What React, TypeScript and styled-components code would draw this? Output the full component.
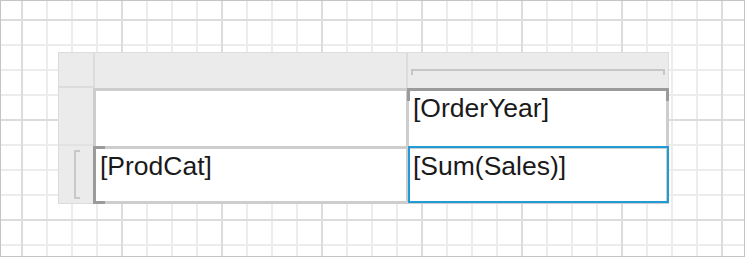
import React from 'react';
import styled, { createGlobalStyle, css } from 'styled-components';

const GlobalStyle = createGlobalStyle`
  html, body {
    margin: 0;
    padding: 0;
    background: #ffffff;
  }

  body {
    font-family: 'Liberation Sans', Arial, sans-serif;
  }
`;

const Canvas = styled.div`
  box-sizing: border-box;
  width: 745px;
  height: 257px;
  padding: 51px 0 0 57px;
  border: 1px solid #c4c4c4;
  background-color: #ffffff;
  background-image:
    linear-gradient(to right, #dcdcdc 2px, transparent 2px),
    linear-gradient(to bottom, #dcdcdc 2px, transparent 2px),
    linear-gradient(to right, #ececec 2px, transparent 2px),
    linear-gradient(to bottom, #ececec 2px, transparent 2px);
  background-size: 100px 100%, 100% 100px, 25px 100%, 100% 25px;
  background-position: 20px 0, 0 18px, 20px 0, 0 18px;
`;

const Tablix = styled.div`
  display: grid;
  grid-template-columns: 35px 576px;
  grid-template-rows: 36px 116px;
  width: 611px;
`;

const handleBase = css`
  box-sizing: border-box;
  position: relative;
  background: #ebebeb;
`;

const Corner = styled.div`
  ${handleBase};
  border-top: 1px solid #dcdcdc;
  border-left: 1px solid #dcdcdc;
  border-bottom: 2px solid #dcdcdc;
`;

const ColumnHandles = styled.div`
  display: grid;
  grid-template-columns: 315px 261px;
`;

interface BracketProps {
  readonly $bracket?: boolean;
}

const ColumnHandle = styled.div<BracketProps>`
  ${handleBase};
  border-top: 1px solid #dcdcdc;

  &:first-child {
    border-left: 2px solid #dcdcdc;
    border-right: 2px solid #dcdcdc;
  }

  &:last-child {
    border-right: 1px solid #dcdcdc;
  }

  ${props =>
    props.$bracket &&
    css`
      &::before {
        content: '';
        position: absolute;
        top: 16px;
        left: 3px;
        right: 3px;
        height: 4px;
        border: 2px solid #c6c6c6;
        border-bottom: none;
      }
    `}
`;

const RowHandles = styled.div`
  display: grid;
  grid-template-rows: 58px 58px;
`;

const RowHandle = styled.div<BracketProps>`
  ${handleBase};
  border-left: 1px solid #dcdcdc;

  &:first-child {
    border-bottom: 2px solid #e2e2e2;
  }

  &:last-child {
    border-bottom: 1px solid #dcdcdc;
  }

  ${props =>
    props.$bracket &&
    css`
      &::before {
        content: '';
        position: absolute;
        top: 4px;
        bottom: 4px;
        left: 15px;
        width: 4px;
        border: 2px solid #c8c8c8;
        border-right: none;
      }
    `}
`;

const Body = styled.div`
  display: grid;
  grid-template-columns: 310px 257px;
  grid-template-rows: 55px 52px;
  gap: 3px;
  padding: 3px;
  background: #cdcdcd;
`;

type Marker = 'column' | 'row';

interface CellProps {
  readonly $marker?: Marker;
  readonly $selected?: boolean;
}

const Cell = styled.div<CellProps>`
  position: relative;
  padding: 2px 4px;
  background: #ffffff;
  color: #1a1a1a;
  font-family: 'Liberation Sans', Arial, sans-serif;
  font-size: 26.5px;
  line-height: 30px;
  white-space: nowrap;

  ${props =>
    props.$marker === 'column' &&
    css`
      &::before {
        content: '';
        position: absolute;
        top: -3px;
        left: -2px;
        right: -3px;
        height: 10px;
        border: 3px solid #9b9b9b;
        border-bottom: none;
      }
    `}

  ${props =>
    props.$marker === 'row' &&
    css`
      &::before {
        content: '';
        position: absolute;
        top: -3px;
        bottom: -3px;
        left: -3px;
        width: 9px;
        border: 3px solid #9b9b9b;
        border-right: none;
      }
    `}

  ${props =>
    props.$selected &&
    css`
      &::after {
        content: '';
        position: absolute;
        top: -3px;
        left: -1px;
        right: -3px;
        bottom: -2px;
        border: 2px solid #1f9bd6;
      }
    `}
`;

const App = () => (
  <>
    <GlobalStyle />
    <Canvas>
      <Tablix>
        <Corner />
        <ColumnHandles>
          <ColumnHandle />
          <ColumnHandle $bracket />
        </ColumnHandles>
        <RowHandles>
          <RowHandle />
          <RowHandle $bracket />
        </RowHandles>
        <Body>
          <Cell />
          <Cell $marker="column">[OrderYear]</Cell>
          <Cell $marker="row">[ProdCat]</Cell>
          <Cell $selected>[Sum(Sales)]</Cell>
        </Body>
      </Tablix>
    </Canvas>
  </>
);

export default App;
